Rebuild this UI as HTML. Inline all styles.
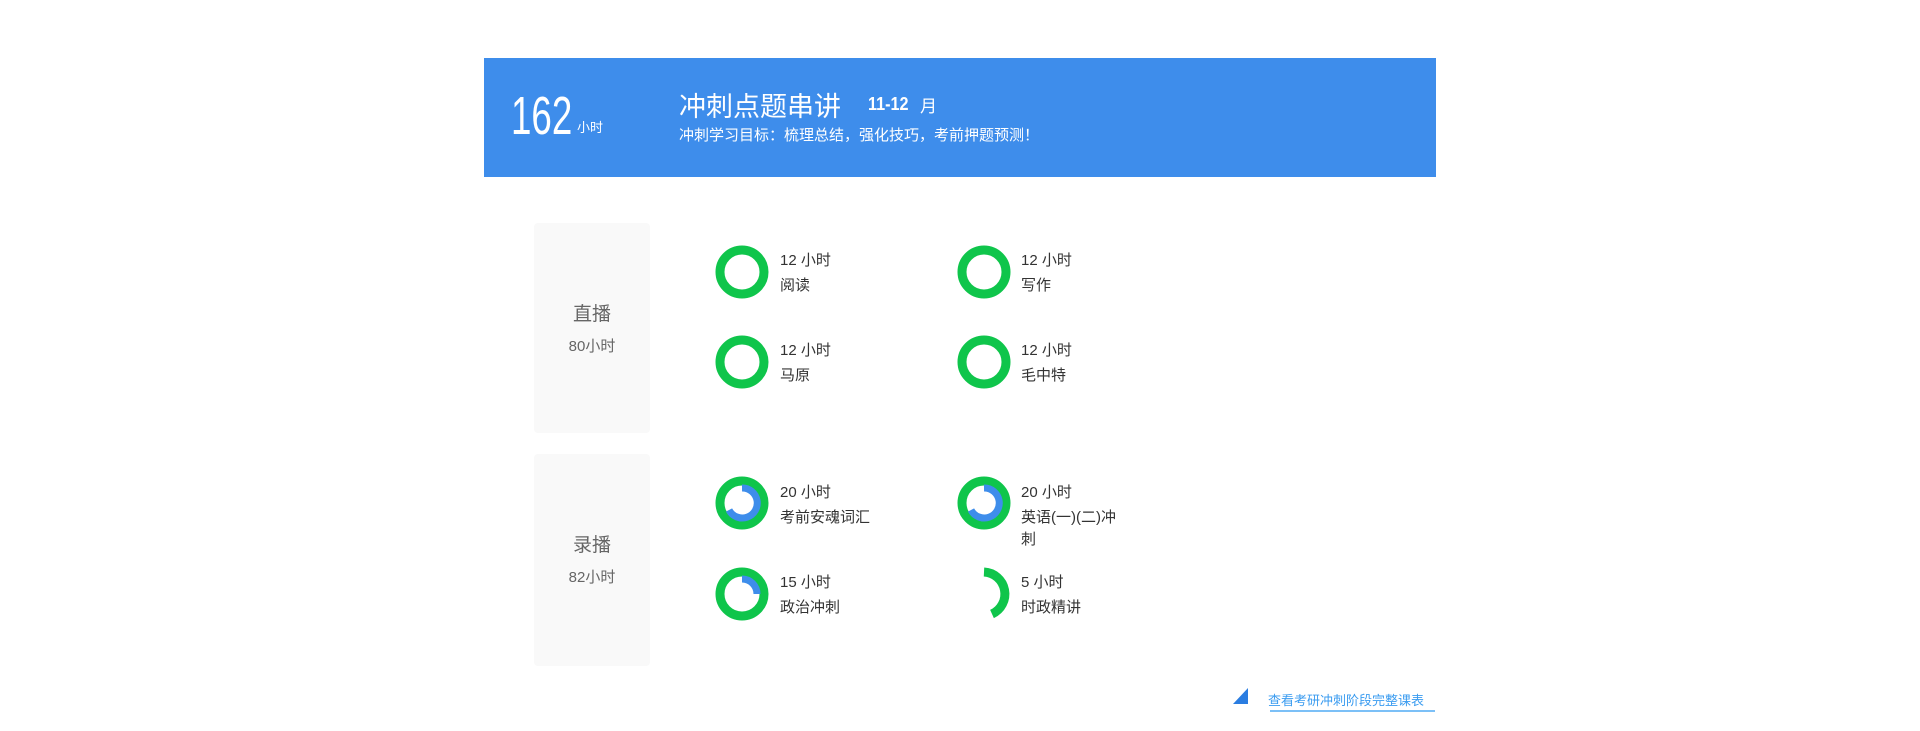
<!DOCTYPE html><html><head><meta charset="utf-8"><style>
body{margin:0;width:1920px;height:731px;background:#fff;font-family:"Liberation Sans","Noto Sans CJK SC",sans-serif;position:relative;overflow:hidden}
.a{position:absolute;white-space:nowrap}
.box{position:absolute;left:534px;width:116px;background:#f9f9f9;border-radius:4px}
.t{font-size:15px;color:#333;line-height:18px}
</style></head><body>
<div class="a" style="left:484px;top:58px;width:952px;height:119px;background:#3e8deb"></div>
<div class="a" style="left:511px;top:86px;font-size:54px;color:#fff;transform:scaleX(0.68);transform-origin:left;line-height:60px">162</div>
<div class="a" style="left:577px;top:117px;font-size:13px;color:#fff">小时</div>
<div class="a" style="left:679px;top:85px;font-size:27px;color:#fff">冲刺点题串讲</div>
<div class="a" style="left:868px;top:94px;font-size:18px;color:#fff;font-weight:bold;transform:scaleX(0.9);transform-origin:left">11-12</div>
<div class="a" style="left:920px;top:92px;font-size:17px;color:#fff">月</div>
<div class="a" style="left:679px;top:124px;font-size:15px;color:#fff">冲刺学习目标：梳理总结，强化技巧，考前押题预测！</div>

<div class="box" style="top:223px;height:210px"></div>
<div class="box" style="top:454px;height:212px"></div>
<div class="a" style="left:534px;width:116px;text-align:center;top:299px;font-size:19px;color:#666">直播</div>
<div class="a" style="left:534px;width:116px;text-align:center;top:335px;font-size:15px;color:#666">80小时</div>
<div class="a" style="left:534px;width:116px;text-align:center;top:530px;font-size:19px;color:#666">录播</div>
<div class="a" style="left:534px;width:116px;text-align:center;top:566px;font-size:15px;color:#666">82小时</div>

<svg class="a" style="left:0;top:0" width="1920" height="731">
<g fill="none" stroke="#0fc54b" stroke-width="9">
<circle cx="742" cy="272" r="22"/><circle cx="984" cy="272" r="22"/>
<circle cx="742" cy="362" r="22"/><circle cx="984" cy="362" r="22"/>
<circle cx="742" cy="503" r="22"/><circle cx="984" cy="503" r="22"/>
<circle cx="742" cy="594" r="22"/>
<path d="M984 572 A22 22 0 0 1 992 614"/>
</g>
<g fill="none" stroke="#3e8deb" stroke-width="7">
<path d="M742 488 A15 15 0 1 1 729 510"/>
<path d="M984 488 A15 15 0 1 1 971 510"/>
<path d="M742 579 A15 15 0 0 1 757 594"/>
</g>
<path d="M1248 688 L1248 704 L1233 704 Z" fill="#2a7de1"/>
<rect x="1270" y="710" width="165" height="2" fill="#7cc0f7"/>
</svg>

<div class="a t" style="left:780px;top:252px">12 小时</div><div class="a t" style="left:780px;top:277px">阅读</div>
<div class="a t" style="left:1021px;top:252px">12 小时</div><div class="a t" style="left:1021px;top:277px">写作</div>
<div class="a t" style="left:780px;top:342px">12 小时</div><div class="a t" style="left:780px;top:367px">马原</div>
<div class="a t" style="left:1021px;top:342px">12 小时</div><div class="a t" style="left:1021px;top:367px">毛中特</div>
<div class="a t" style="left:780px;top:484px">20 小时</div><div class="a t" style="left:780px;top:509px">考前安魂词汇</div>
<div class="a t" style="left:1021px;top:484px">20 小时</div><div class="a t" style="left:1021px;top:509px">英语(一)(二)冲</div><div class="a t" style="left:1021px;top:531px">刺</div>
<div class="a t" style="left:780px;top:574px">15 小时</div><div class="a t" style="left:780px;top:599px">政治冲刺</div>
<div class="a t" style="left:1021px;top:574px">5 小时</div><div class="a t" style="left:1021px;top:599px">时政精讲</div>
<div class="a" style="left:1268px;top:690px;font-size:13px;color:#3b9cf0">查看考研冲刺阶段完整课表</div>
</body></html>
